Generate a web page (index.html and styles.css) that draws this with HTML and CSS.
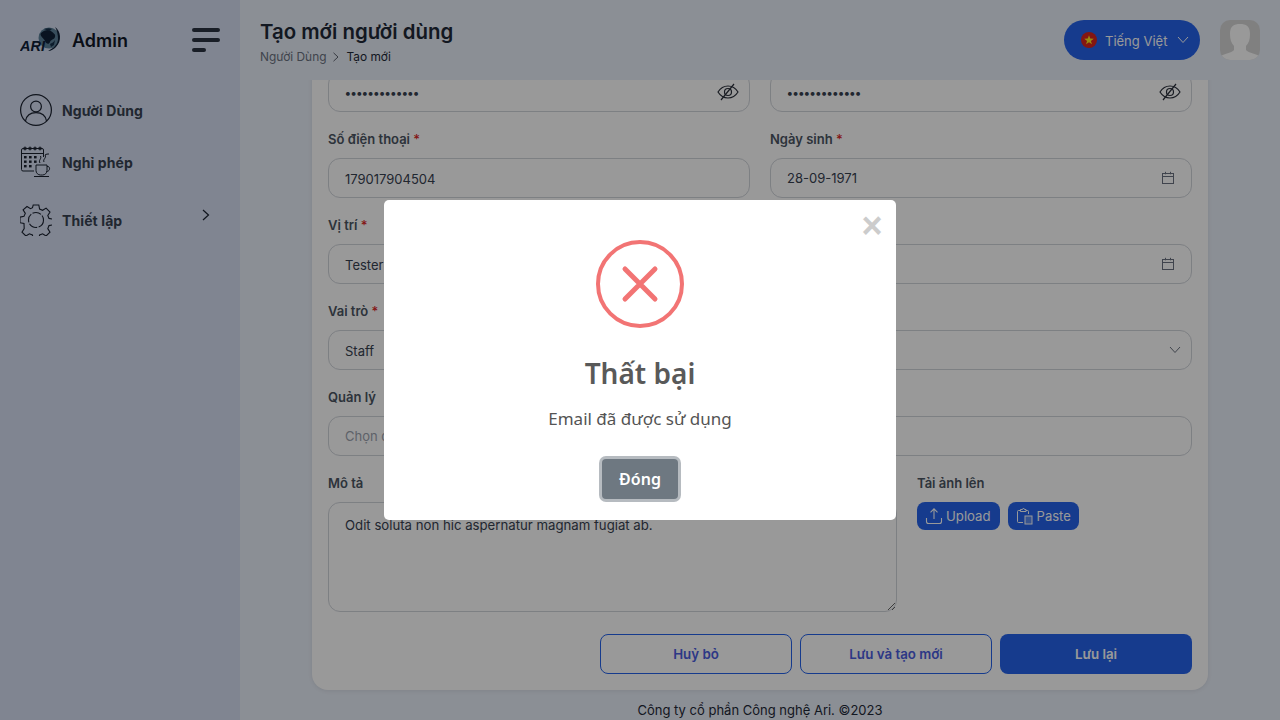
FILE: index.html
```html
<!DOCTYPE html>
<html lang="vi">
<head>
  <meta charset="UTF-8">
  <title>Tạo mới người dùng</title>
  <link rel="stylesheet" href="styles.css">
</head>
<body>

<div class="app">
  <!-- Sidebar -->
  <aside class="sidebar">
    <div class="brand">
      <svg class="brand-logo" width="42" height="28" viewBox="0 0 42 28">
        <circle cx="29" cy="12" r="10.500" fill="#5d8199"/>
        <path d="M21 7c3-3 8-4 10-2s5 3 4 6-4 2-5 5-4 2-5-1-6-5-4-8z" fill="#0f2138"/>
        <path d="M24 3c3-1 6-1 8 0l-3 2zM30 18c2-1 4-2 5-4l-1 5-3 2z" fill="#16304a"/>
        <path d="M35 1c6 4 7 14 1 20-2 2-5 4-8 4 6-3 10-7 10-12 0-4-1-9-3-12z" fill="#0f2138"/>
        <text x="0" y="25" class="brand-mark" textLength="25" lengthAdjust="spacingAndGlyphs">ARI</text>
      </svg>
      <span class="brand-name">Admin</span>
      <div class="burger"><i></i><i></i><i class="short"></i></div>
    </div>

    <nav class="nav">
      <a class="nav-item">
        <svg width="32" height="32" viewBox="0 0 32 32" fill="none" stroke="#1b2230" stroke-width="1.200">
          <circle cx="16" cy="16" r="15.400"/>
          <circle cx="16" cy="12.500" r="5.400"/>
          <path d="M5.500 27c1-5.500 5-8.300 10.500-8.300S25.500 21.500 26.500 27"/>
        </svg>
        <span>Người Dùng</span>
      </a>
      <a class="nav-item nav-item-leave">
        <svg width="32" height="32" viewBox="0 0 32 32" fill="none" stroke="#1b2230" stroke-width="1">
          <path d="M14 25H3a1.500 1.500 0 0 1-1.500-1.500V4A1.500 1.500 0 0 1 3 2.500h19A1.500 1.500 0 0 1 23.500 4v7"/>
          <path d="M1.500 7.500h22"/>
          <circle cx="5" cy="2.500" r="1.400"/><circle cx="10" cy="2.500" r="1.400"/><circle cx="15" cy="2.500" r="1.400"/><circle cx="20" cy="2.500" r="1.400"/>
          <g fill="#1b2230" stroke="none">
            <rect x="4" y="10" width="2.600" height="2.400"/><rect x="9" y="10" width="2.600" height="2.400"/><rect x="14" y="10" width="2.600" height="2.400"/>
            <rect x="4" y="14.500" width="2.600" height="2.400"/><rect x="9" y="14.500" width="2.600" height="2.400"/><rect x="14" y="14.500" width="2.600" height="2.400"/>
            <rect x="4" y="19" width="2.600" height="2.400"/><rect x="9" y="19" width="2.600" height="2.400"/>
          </g>
          <path d="M16 19h11v5.500a4.500 4.500 0 0 1-4.500 4.500h-2a4.500 4.500 0 0 1-4.500-4.500z"/>
          <path d="M27 20.500c3.500-.8 3.500 5-.5 5"/>
          <path d="M14 30.500h15"/>
          <path d="M20 17c-2-3 2-4 .5-7M24 16c-1.500-3 3-4 1-7 1-1 3-1 4-1"/>
        </svg>
        <span>Nghỉ phép</span>
      </a>
      <a class="nav-item nav-item-settings">
        <svg width="32" height="32" viewBox="0 0 32 32" fill="none" stroke="#1b2230" stroke-width="1.100">
          <path d="M13.200 1h5.600l.8 4 3 1.300 3.500-2.200 3.900 3.900-2.200 3.500 1.200 2.900 4 .8v5.600l-4 .8-1.200 3 2.200 3.500-3.900 3.900-3.500-2.200-3 1.200-.8 4h-5.600l-.8-4-3-1.200-3.500 2.200-3.900-3.900 2.200-3.500L4 19.500l-4-.8v-5.600l4-.8 1.300-2.900-2.200-3.500L7 2.500l3.500 2.200 2-1z"/>
          <circle cx="16" cy="16" r="7.500" stroke-dasharray="9 1.500"/>
        </svg>
        <span>Thiết lập</span>
        <svg class="nav-arrow" width="10" height="12" viewBox="0 0 10 12" fill="none" stroke="#1b2230" stroke-width="1.200"><path d="M2 1l5.500 5L2 11"/></svg>
      </a>
    </nav>
  </aside>

  <div class="main">
    <!-- Header -->
    <header class="topbar">
      <div class="page-head">
        <h1>Tạo mới người dùng</h1>
        <div class="crumbs">
          <span class="crumb-link">Người Dùng</span>
          <svg width="8" height="10" viewBox="0 0 8 10" fill="none" stroke="#5e6470" stroke-width="1"><path d="M1.500 .8L6 5 1.500 9.200"/></svg>
          <span class="crumb-now">Tạo mới</span>
        </div>
      </div>
      <div class="top-right">
        <div class="lang">
          <svg width="16" height="16" viewBox="0 0 16 16">
            <circle cx="8" cy="8" r="8" fill="#da251d"/>
            <polygon points="8,3.200 9.200,6.600 12.800,6.700 9.900,8.900 11,12.300 8,10.300 5,12.300 6.100,8.900 3.200,6.700 6.800,6.600" fill="#ffe81a"/>
          </svg>
          <span>Tiếng Việt</span>
          <svg width="12" height="8" viewBox="0 0 12 8" fill="none" stroke="currentColor" stroke-width="1"><path d="M1 1l5 5.500L11 1"/></svg>
        </div>
        <div class="avatar">
          <svg width="40" height="40" viewBox="0 0 40 40">
            <path d="M0 40v-3c2-3 12-4 14-7v-4c-3-3-4-7-4-12C10 6 14 4 20 4s10 2 10 10c0 5-1 9-4 12v4c2 3 12 4 14 7v3z" fill="#fff"/>
          </svg>
        </div>
      </div>
    </header>

    <!-- Form -->
    <div class="content">
      <section class="card">
        <div class="form-grid">
          <div class="field">
            <div class="input-box"><span class="dots">•••••••••••••</span>
              <svg class="eye" width="22" height="18" viewBox="0 0 22 18" fill="none" stroke="#2b303b" stroke-width="1.200"><path d="M1 9c2.500-4 6-6 10-6s7.500 2 10 6c-2.500 4-6 6-10 6S3.500 13 1 9z"/><circle cx="11" cy="9" r="3.500"/><path d="M17 1L4 17"/></svg>
            </div>
          </div>
          <div class="field">
            <div class="input-box"><span class="dots">•••••••••••••</span>
              <svg class="eye" width="22" height="18" viewBox="0 0 22 18" fill="none" stroke="#2b303b" stroke-width="1.200"><path d="M1 9c2.500-4 6-6 10-6s7.500 2 10 6c-2.500 4-6 6-10 6S3.500 13 1 9z"/><circle cx="11" cy="9" r="3.500"/><path d="M17 1L4 17"/></svg>
            </div>
          </div>

          <div class="field">
            <label>Số điện thoại <b>*</b></label>
            <div class="input-box"><span class="low">179017904504</span></div>
          </div>
          <div class="field">
            <label>Ngày sinh <b>*</b></label>
            <div class="input-box"><span>28-09-1971</span>
              <svg class="cal" width="14" height="14" viewBox="0 0 14 14" fill="none" stroke="#6b7280" stroke-width="1"><rect x="1.500" y="2.500" width="11" height="10"/><path d="M1.500 5.500h11M4.500 .8v2.500M9.500 .8v2.500"/></svg>
            </div>
          </div>

          <div class="field">
            <label>Vị trí <b>*</b></label>
            <div class="input-box"><span class="low">Tester</span></div>
          </div>
          <div class="field">
            <label>Ngày vào làm</label>
            <div class="input-box"><span></span>
              <svg class="cal" width="14" height="14" viewBox="0 0 14 14" fill="none" stroke="#6b7280" stroke-width="1"><rect x="1.500" y="2.500" width="11" height="10"/><path d="M1.500 5.500h11M4.500 .8v2.500M9.500 .8v2.500"/></svg>
            </div>
          </div>

          <div class="field">
            <label>Vai trò <b>*</b></label>
            <div class="input-box"><span class="low">Staff</span></div>
          </div>
          <div class="field">
            <label>Phòng ban</label>
            <div class="input-box"><span></span>
              <svg class="chev" width="12" height="8" viewBox="0 0 12 8" fill="none" stroke="#6b7280" stroke-width="1"><path d="M1 1l5 5.500L11 1"/></svg>
            </div>
          </div>

          <div class="field">
            <label>Quản lý</label>
            <div class="input-box"><span class="placeholder">Chọn quản lý</span></div>
          </div>
          <div class="field">
            <label>Nhóm</label>
            <div class="input-box"><span></span></div>
          </div>
        </div>

        <div class="desc-row">
          <div class="field">
            <label>Mô tả</label>
            <textarea class="desc">Odit soluta non hic aspernatur magnam fugiat ab.</textarea>
          </div>
          <div class="field">
            <label>Tải ảnh lên</label>
            <div class="upload-btns">
              <button class="btn-sm">
                <svg width="18" height="18" viewBox="0 0 18 18" fill="none" stroke="currentColor" stroke-width="1.100"><path d="M9 12V2M5.500 5.300L9 1.800l3.500 3.500M1.500 11v3.500a2 2 0 0 0 2 2h11a2 2 0 0 0 2-2V11"/></svg>
                Upload
              </button>
              <button class="btn-sm">
                <svg width="18" height="18" viewBox="0 0 18 18" fill="none" stroke="currentColor" stroke-width="1"><path d="M7 15.500H2.500a1 1 0 0 1-1-1v-10a1 1 0 0 1 1-1h2M10 3.500h1.500a1 1 0 0 1 1 1V7"/><path d="M4.500 4.500v-2h2l1-1.500 1 1.500h1.500v2z"/><rect x="9" y="9" width="7" height="8" fill="currentColor" fill-opacity=".25"/></svg>
                Paste
              </button>
            </div>
          </div>
        </div>

        <div class="actions">
          <button class="btn btn-outline">Huỷ bỏ</button>
          <button class="btn btn-outline">Lưu và tạo mới</button>
          <button class="btn btn-primary">Lưu lại</button>
        </div>
      </section>
      <footer class="footer">Công ty cổ phần Công nghệ Ari. ©2023</footer>
    </div>
  </div>
</div>

<!-- Error dialog -->
<div class="overlay">
  <div class="modal">
    <span class="modal-close">×</span>
    <svg class="modal-icon" width="88" height="88" viewBox="0 0 88 88" fill="none" stroke="#f27474">
      <circle cx="44" cy="44" r="42" stroke-width="4"/>
      <path d="M29 29l30 30M59 29L29 59" stroke-width="5" stroke-linecap="round"/>
    </svg>
    <h2>Thất bại</h2>
    <p>Email đã được sử dụng</p>
    <button class="modal-btn">Đóng</button>
  </div>
</div>

</body>
</html>
```

FILE: styles.css
```css
* {
  box-sizing: border-box;
}
body {
  margin: 0;
  font-family: Inter, "Noto Sans", sans-serif;
  color: #1f2937;
  overflow: hidden;
}
h1, h2, p {
  margin: 0;
}

.app {
  display: flex;
  height: 720px;
}

/* Sidebar */
.sidebar {
  width: 240px;
  flex-shrink: 0;
  padding: 20px 20px 0;
  background: #d5def2;
}
.brand {
  display: flex;
  align-items: center;
  height: 40px;
}
.brand-logo {
  margin-right: 10px;
}
.brand-mark {
  font: italic 700 14px "Liberation Sans", sans-serif;
  fill: #0f2138;
}
.brand-name {
  flex: 1;
  font-size: 18px;
  font-weight: 600;
  color: #111827;
}
.burger {
  width: 28px;
  display: flex;
  flex-direction: column;
  gap: 6px;
}
.burger i {
  display: block;
  height: 4px;
  border-radius: 2px;
  background: #2b3342;
}
.burger i.short {
  width: 14px;
}

.nav {
  display: flex;
  flex-direction: column;
  margin-top: 34px;
}
.nav-item {
  display: flex;
  align-items: center;
  gap: 10px;
  height: 32px;
  font-size: 14px;
  font-weight: 700;
  letter-spacing: .1px;
  color: #374151;
}
.nav-item-leave {
  margin-top: 20px;
}
.nav-item-settings {
  margin-top: 26px;
}
.nav-arrow {
  margin-left: auto;
  margin-right: 9px;
  margin-top: -10px;
}

/* Main */
.main {
  flex: 1;
  display: flex;
  flex-direction: column;
  background: #e8eef8;
  min-width: 0;
}
.topbar {
  height: 80px;
  flex-shrink: 0;
  display: flex;
  align-items: center;
  justify-content: space-between;
  padding: 0 20px;
}
.page-head {
  padding-top: 4px;
}
.page-head h1 {
  font-size: 20.400px;
  line-height: 26px;
  font-weight: 600;
  color: #1f2937;
}
.crumbs {
  display: flex;
  align-items: center;
  gap: 6px;
  margin-top: 3px;
  font-size: 11.900px;
  line-height: 18px;
}
.crumb-link {
  color: #6b7280;
}
.crumb-now {
  color: #1f2937;
}
.top-right {
  display: flex;
  align-items: center;
  gap: 20px;
}
.lang {
  display: flex;
  align-items: center;
  width: 136px;
  height: 40px;
  padding: 0 11px 0 17px;
  border-radius: 20px;
  background: #2563eb;
  color: #fff;
  font-size: 13px;
  gap: 8px;
}
.lang span {
  flex: 1;
  padding-top: 2px;
}
.avatar {
  width: 40px;
  height: 40px;
  border-radius: 10px;
  background: #d6d6d6;
  overflow: hidden;
}
.avatar svg {
  display: block;
}

.content {
  flex: 1;
  min-height: 0;
  overflow: hidden;
  display: flex;
  flex-direction: column;
  justify-content: flex-end;
  padding: 0 72px;
}
.card {
  flex-shrink: 0;
  padding: 16px;
  background: #fff;
  border-radius: 16px;
  box-shadow: 0 1px 4px rgba(0, 0, 0, .08);
}
.footer {
  height: 30px;
  flex-shrink: 0;
  display: flex;
  align-items: center;
  justify-content: center;
  font-size: 13px;
  color: #1f2937;
  padding-top: 10px;
}

/* Form */
.form-grid {
  display: grid;
  grid-template-columns: 1fr 1fr;
  column-gap: 20px;
  row-gap: 18px;
}
.field label {
  display: block;
  height: 20px;
  line-height: 18px;
  margin-bottom: 8px;
  font-size: 13px;
  font-weight: 600;
  color: #4b5563;
}
.field label b {
  color: #dc2626;
  font-weight: 500;
}
.input-box {
  display: flex;
  align-items: center;
  justify-content: space-between;
  height: 40px;
  padding: 0 16px;
  border: 1px solid #d1d5db;
  border-radius: 12px;
  font-size: 13px;
  color: #374151;
}
.low {
  padding-top: 2px;
}
.dots {
  font-size: 12px;
  font-weight: 700;
}
.placeholder {
  color: #9ca3af;
}
.eye {
  margin-right: -6px;
}
.cal {
  margin-right: 0;
}
.chev {
  margin-right: -6px;
}

.desc-row {
  display: grid;
  grid-template-columns: 569px 1fr;
  column-gap: 20px;
  margin-top: 18px;
}
.desc {
  display: block;
  width: 100%;
  height: 110px;
  padding: 12px 16px;
  border: 1px solid #d1d5db;
  border-radius: 12px;
  background: #fff;
  font-family: inherit;
  font-size: 13.200px;
  line-height: 20px;
  color: #374151;
}
.upload-btns {
  display: flex;
  gap: 8px;
}
.btn-sm {
  display: flex;
  align-items: center;
  gap: 3px;
  height: 28px;
  padding: 0 8px;
  border: 0;
  border-radius: 8px;
  background: #2563eb;
  color: #fff;
  font-family: inherit;
  font-size: 13px;
}
.btn-sm:first-child {
  padding-right: 9px;
  font-size: 13.200px;
}

.actions {
  display: flex;
  justify-content: flex-end;
  gap: 8px;
  margin-top: 22px;
}
.btn {
  width: 192px;
  height: 40px;
  border-radius: 8px;
  font-family: inherit;
  font-size: 13.300px;
  font-weight: 600;
}
.btn-outline {
  border: 1px solid #2563eb;
  background: #fff;
  color: #4b5ee0;
}
.btn-primary {
  border: 0;
  background: #2563eb;
  color: #fff;
}

/* Dialog */
.overlay {
  position: fixed;
  inset: 0;
  display: flex;
  align-items: center;
  justify-content: center;
  background: rgba(0, 0, 0, .4);
}
.modal {
  position: relative;
  width: 512px;
  height: 320px;
  padding-top: 40px;
  display: flex;
  flex-direction: column;
  align-items: center;
  background: #fff;
  border-radius: 5px;
  font-family: "Noto Sans", sans-serif;
}
.modal-close {
  position: absolute;
  top: 8px;
  right: 8px;
  width: 32px;
  height: 36px;
  line-height: 36px;
  text-align: center;
  font-family: "Liberation Sans", sans-serif;
  font-size: 36px;
  font-weight: 700;
  color: #ccc;
}
.modal-icon {
  display: block;
}
.modal h2 {
  margin-top: 22px;
  font-size: 28px;
  line-height: 46px;
  font-weight: 600;
  color: #595959;
}
.modal p {
  margin-top: 10px;
  font-size: 17px;
  line-height: 26px;
  color: #545454;
}
.modal-btn {
  margin-top: 27px;
  width: 76px;
  height: 40px;
  border: 0;
  border-radius: 4px;
  background: #6e7881;
  box-shadow: 0 0 0 3px rgba(110, 120, 129, .5);
  color: #fff;
  font-family: inherit;
  font-size: 16px;
  font-weight: 600;
}
```
